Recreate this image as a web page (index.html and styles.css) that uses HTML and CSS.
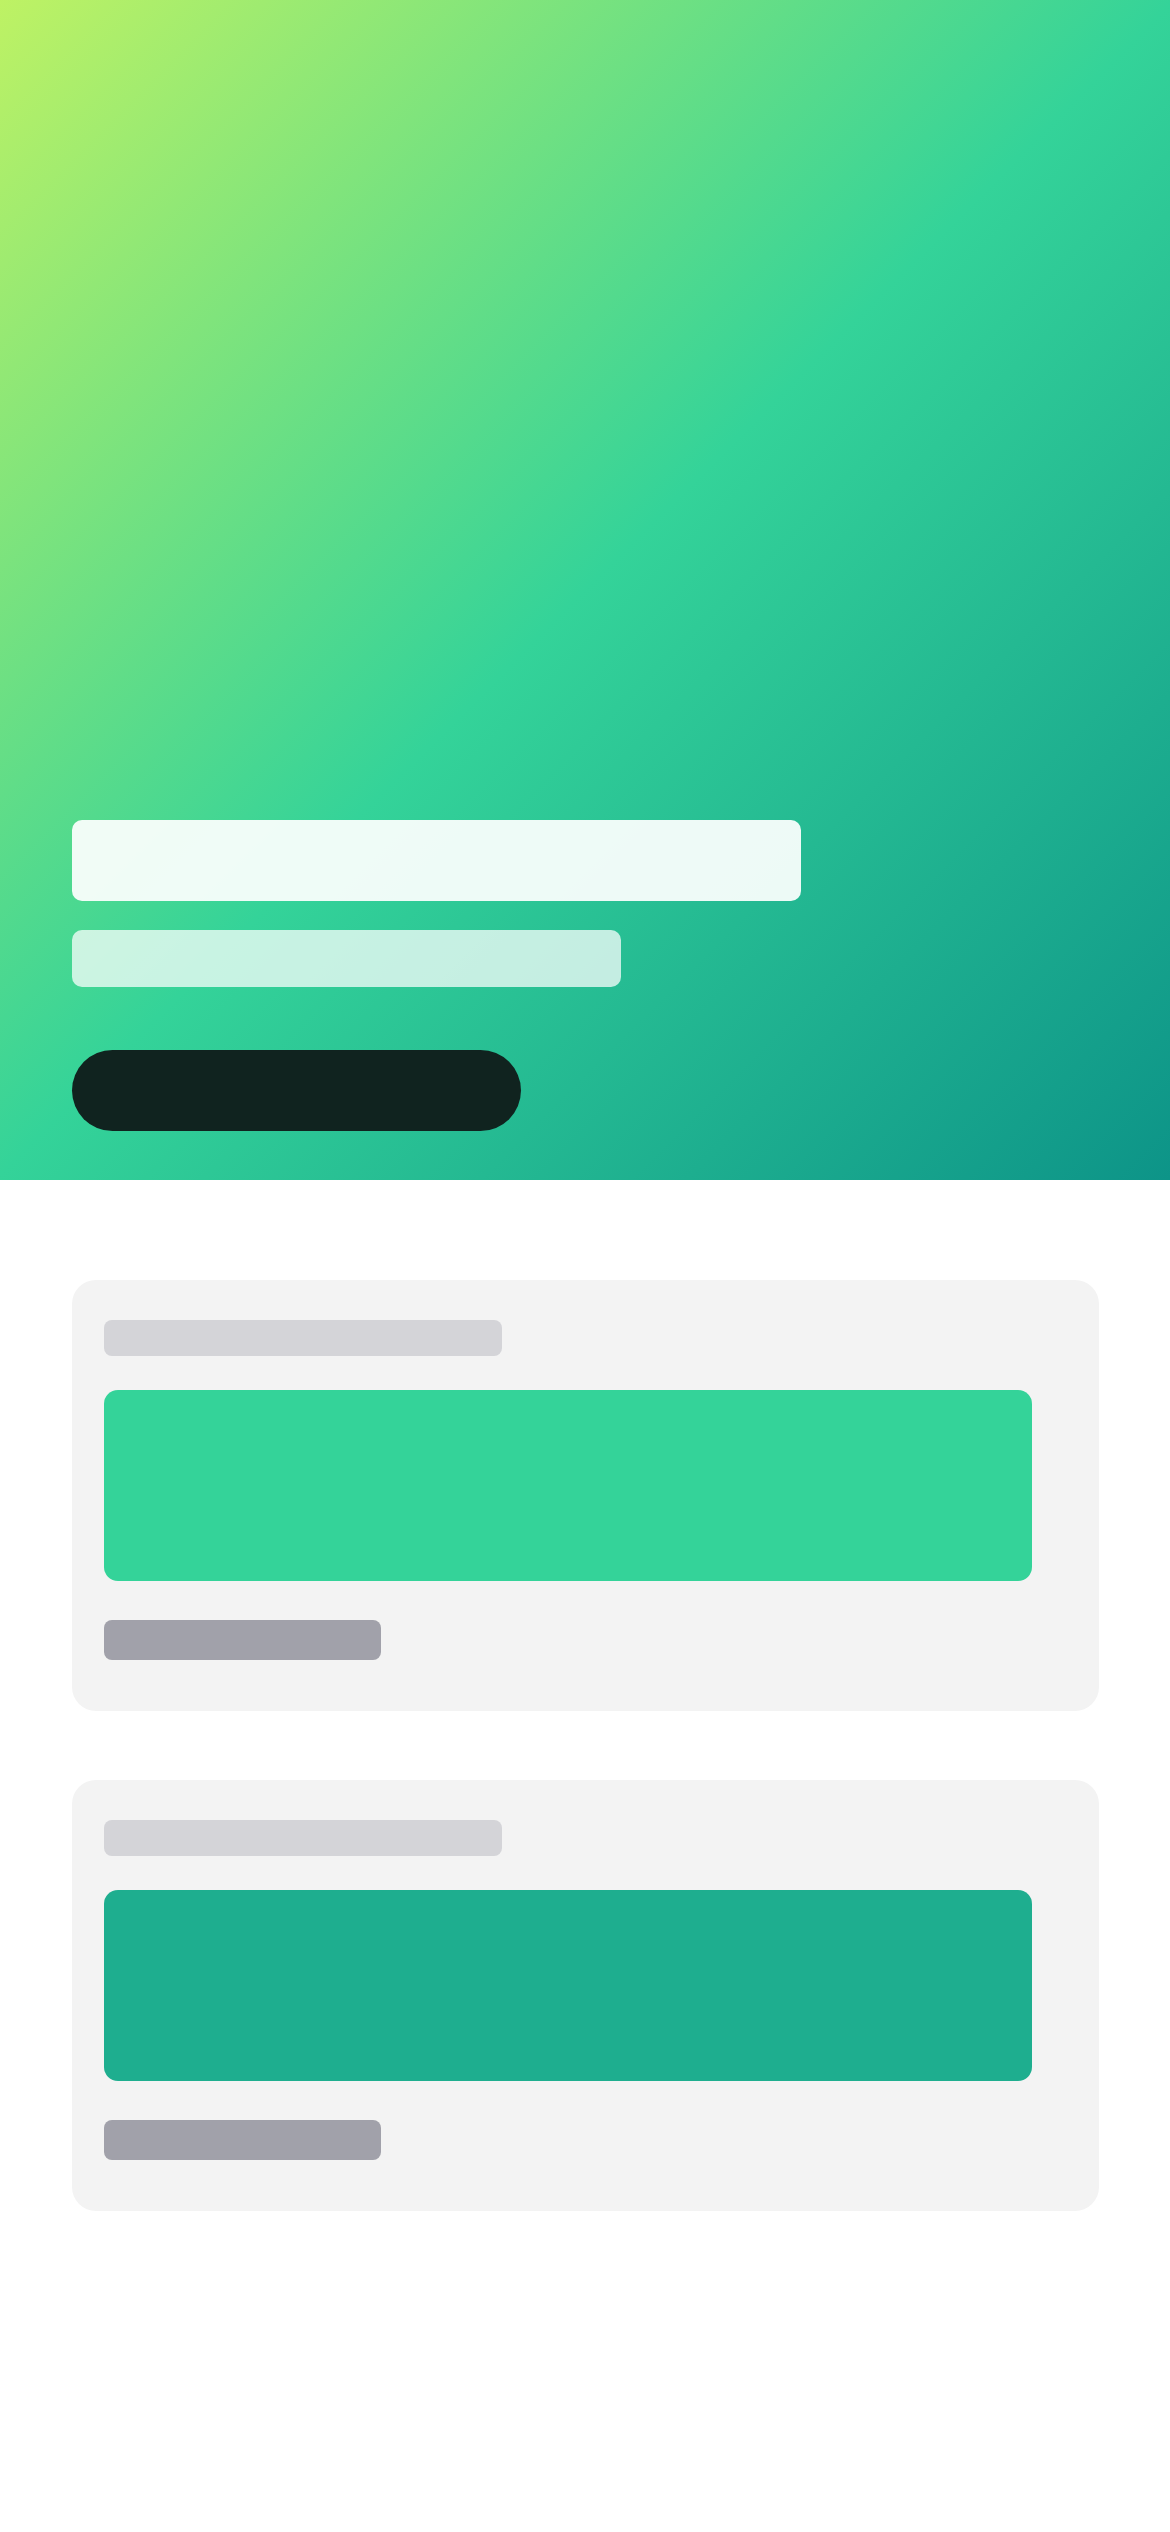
FILE: index.html
```html
<!DOCTYPE html>
<html lang="en">
<head>
    <meta charset="UTF-8">
    <meta name="viewport" content="width=device-width, initial-scale=1.0">
    <title>Loading</title>
    <link rel="stylesheet" href="styles.css">
</head>
<body>
    <header class="hero">
        <div class="hero-title"></div>
        <div class="hero-subtitle"></div>
        <div class="hero-button"></div>
    </header>
    <main class="feed">
        <div class="card">
            <div class="card-label"></div>
            <div class="card-media media-emerald"></div>
            <div class="card-meta"></div>
        </div>
        <div class="card">
            <div class="card-label"></div>
            <div class="card-media media-teal"></div>
            <div class="card-meta"></div>
        </div>
    </main>
</body>
</html>
```

FILE: styles.css
```css
:root {
    --lime: #bef264;
    --emerald: #34d399;
    --teal: #0d9488;
    --teal-mid: #1eae8f;
    --card-bg: #f3f3f3;
    --skeleton-light: #d4d4d8;
    --skeleton-dark: #a1a1aa;
    --ink: #10231f;
}

body {
    margin: 0;
    background: #ffffff;
    font-family: Inter, 'Noto Sans', sans-serif;
}

/* gradient banner with placeholder heading and call to action */
.hero {
    height: 1180px;
    box-sizing: border-box;
    padding: 0 72px 49px;
    display: flex;
    flex-direction: column;
    justify-content: flex-end;
    align-items: flex-start;
    background: linear-gradient(135deg, var(--lime) 0%, var(--emerald) 50%, var(--teal) 100%);
}

.hero-title {
    width: 729px;
    height: 81px;
    border-radius: 10px;
    background: rgba(255, 255, 255, 0.92);
}

.hero-subtitle {
    width: 549px;
    height: 57px;
    margin-top: 29px;
    border-radius: 10px;
    background: rgba(255, 255, 255, 0.73);
}

.hero-button {
    width: 449px;
    height: 81px;
    margin-top: 63px;
    border-radius: 41px;
    background: var(--ink);
}

/* skeleton cards */
.feed {
    padding: 100px 71px 100px 72px;
    display: flex;
    flex-direction: column;
    gap: 69px;
}

.card {
    background: var(--card-bg);
    border-radius: 24px;
    padding: 40px 32px 51px;
    display: flex;
    flex-direction: column;
    align-items: flex-start;
}

.card-label {
    width: 398px;
    height: 36px;
    border-radius: 8px;
    background: var(--skeleton-light);
}

.card-media {
    width: 928px;
    height: 191px;
    margin-top: 34px;
    border-radius: 14px;
}

.media-emerald {
    background: var(--emerald);
}

.media-teal {
    background: var(--teal-mid);
}

.card-meta {
    width: 277px;
    height: 40px;
    margin-top: 39px;
    border-radius: 8px;
    background: var(--skeleton-dark);
}
```
